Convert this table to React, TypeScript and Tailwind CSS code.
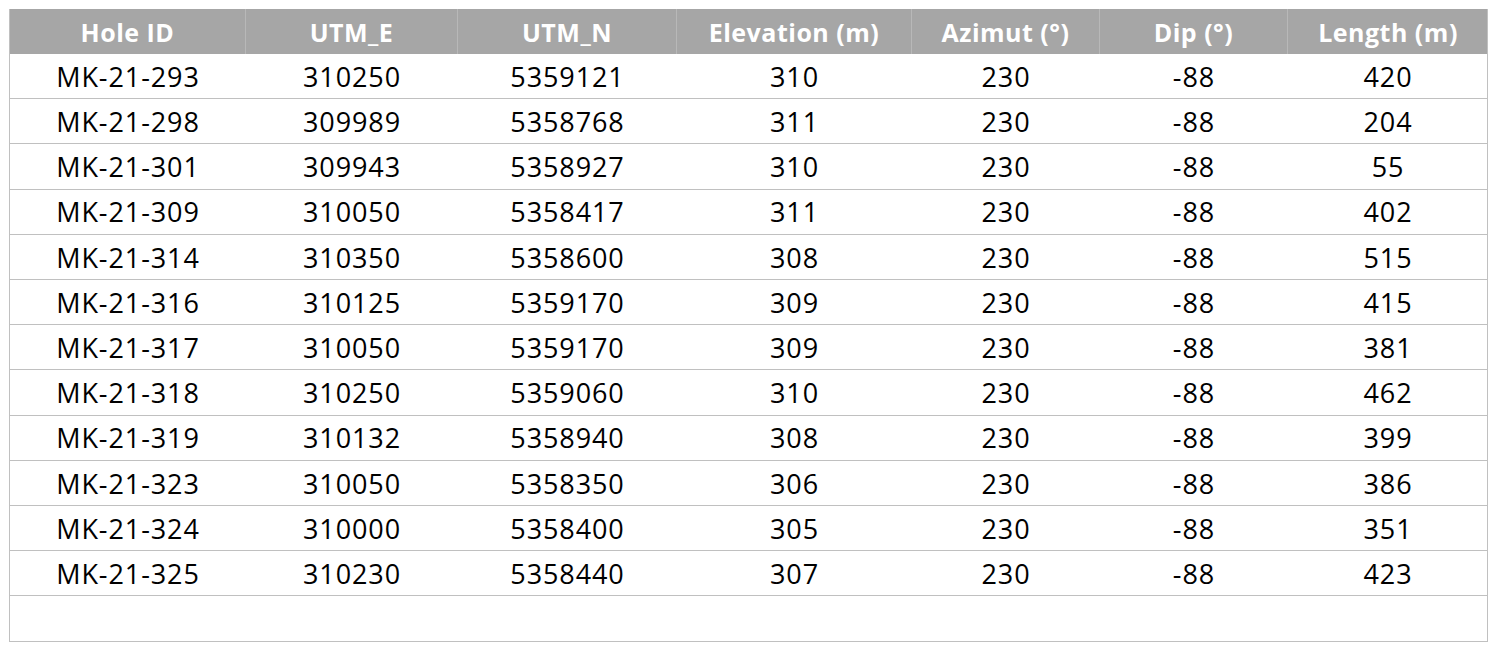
import React from "react";

const headers = ["Hole ID", "UTM_E", "UTM_N", "Elevation (m)", "Azimut (°)", "Dip (°)", "Length (m)"];
const rows: string[][] = [
  ["MK-21-293", "310250", "5359121", "310", "230", "-88", "420"],
  ["MK-21-298", "309989", "5358768", "311", "230", "-88", "204"],
  ["MK-21-301", "309943", "5358927", "310", "230", "-88", "55"],
  ["MK-21-309", "310050", "5358417", "311", "230", "-88", "402"],
  ["MK-21-314", "310350", "5358600", "308", "230", "-88", "515"],
  ["MK-21-316", "310125", "5359170", "309", "230", "-88", "415"],
  ["MK-21-317", "310050", "5359170", "309", "230", "-88", "381"],
  ["MK-21-318", "310250", "5359060", "310", "230", "-88", "462"],
  ["MK-21-319", "310132", "5358940", "308", "230", "-88", "399"],
  ["MK-21-323", "310050", "5358350", "306", "230", "-88", "386"],
  ["MK-21-324", "310000", "5358400", "305", "230", "-88", "351"],
  ["MK-21-325", "310230", "5358440", "307", "230", "-88", "423"],
];

const grid = "grid grid-cols-[236px_212px_219px_235px_188px_188px_200px]";

export default function App() {
  return (
    <div className="w-[1498px] h-[660px] bg-white pt-[9px] pl-[9px]" style={{ fontFamily: '"Open Sans", sans-serif' }}>
      <div className="w-[1479px] border border-[#c0c0c0] border-t-0">
        <div className={`${grid} h-[45px] bg-[#a6a6a6]`}>
          {headers.map((h, i) => (
            <div
              key={i}
              className={`flex items-center justify-center pt-[3px] text-white font-bold text-[25px] tracking-[0.5px] ${i < 6 ? "border-r border-[#b8b8b8]" : ""}`}
            >
              {h}
            </div>
          ))}
        </div>
        {rows.map((r, ri) => (
          <div key={ri} className={`${grid} h-[45.2px] border-b border-[#c0c0c0]`}>
            {r.map((c, ci) => (
              <div
                key={ci}
                className="flex items-center justify-center pt-[2px] text-black text-[27px] tracking-[0.9px]"
              >
                {c}
              </div>
            ))}
          </div>
        ))}
        <div className="h-[45px]" />
      </div>
    </div>
  );
}
